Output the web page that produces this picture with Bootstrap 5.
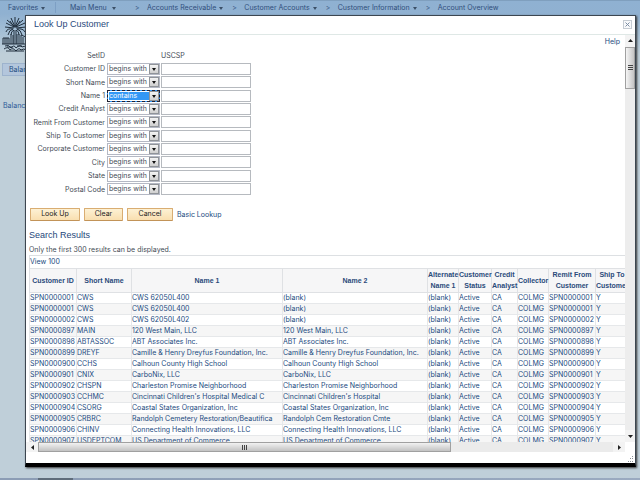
<!DOCTYPE html>
<html lang="en">
<head>
<meta charset="utf-8">
<meta name="viewport" content="width=device-width, initial-scale=1">
<title>Look Up Customer</title>
<link href="https://cdn.jsdelivr.net/npm/bootstrap@5.3.0/dist/css/bootstrap.min.css" rel="stylesheet">
<style>
:root { --ui: Inter, "Liberation Sans", Arial, sans-serif; --display: "Liberation Sans", Arial, sans-serif; }
body { font-family: var(--ui); font-size: 7px; line-height: 11px; color: #444b55; min-height: 100vh;
  background: linear-gradient(#8fb1d2 0, #90b1d1 14px, #a9c2d6 36px, #bfcfd9 54px, #bfcfd9 100%); }
a { text-decoration: none; color: #1b4a80; }
button, input, select { font-family: inherit; font-size: inherit; line-height: inherit; color: inherit; }
.crumbs { height: 14px; border-top: 1px solid #7f9fbe; color: #304f7c; }
.crumbs a { color: #304f7c; }
.caret { display: inline-block; border: 2px solid transparent; border-top: 3px solid #3c5068; border-bottom: 0; vertical-align: middle; margin-left: 3px; }
.fav { border-right: 1px solid #7d9fc4; width: 56px; padding-left: 8px; }
.main-menu { width: 79px; padding-left: 14px; }
.sep { width: 12px; }
.crumb-next { margin-left: 9px; }
.emblem { display: block; margin: 3px 0 11px 2px; }
.page-tab { display: block; width: 60px; height: 13px; margin-left: 2px; padding: 0 0 0 6px; border: 1px solid #9db3cd; background: #b3c6dc; }
.side-label { margin: 24px 0 0 3px; color: #2d5a98; }
.taskline { height: 2px; background: linear-gradient(90deg, #8c9db5 38px, #5f6d7b 38px, #5f6d7b 73px, #8c9db5 73px, #9aaac0); }
.lookup { position: absolute; inset: 15px 4px 13px 25px; background: #fff; border: 1px solid #3c4650; border-bottom: 4px solid #000; box-shadow: 1px 1px 2px #333; }
.lookup-head { height: 19px; border-bottom: 1px solid #dfe8e6; padding: 0 3px 0 8px; }
.lookup-head h1 { font: 9px/17px var(--display); color: #2b4a7c; }
.close-x { width: 9px; height: 9px; border: 1px solid #c6ccd3; background: #f8f9fb; padding: 0; }
.pane { min-width: 0; min-height: 0; overflow: hidden; }
.inner { padding: 0 0 0 3px; }
.help { padding-right: 5px; height: 14px; padding-top: 1px; }
.criteria { height: 147px; }
.criteria .crit { gap: 1px; }
.crit label, .crit .tag { width: 76px; text-align: right; white-space: nowrap; margin-right: 1px; }
.pick { position: relative; width: 53px; height: 12px; }
.pick select { appearance: none; width: 100%; height: 12px; border: 1px solid #b4b8c4; border-radius: 0; background: #fff; padding: 0 0 0 1px; line-height: 10px; outline: 0; }
.pick::after { content: ""; position: absolute; right: 1px; top: 1px; width: 10px; height: 10px; border: 1px solid #909499; background: linear-gradient(#f4f4f4, #cfcfcf); pointer-events: none; }
.pick::before { content: ""; position: absolute; z-index: 1; right: 4px; top: 5px; border: 2px solid transparent; border-top: 3px solid #111; border-bottom: 0; pointer-events: none; }
.pick.active select { background: #3397f5; color: #fff; border: 1px dashed #223; box-shadow: inset 0 0 0 1px #fff; }
.entry { width: 90px; height: 12px; border: 1px solid #b6babf; border-radius: 0; padding: 0 2px; }
.act { height: 13px; border: 1px solid #d9ad72; border-bottom-color: #c29358; border-radius: 1px; background: linear-gradient(#fdf1d4, #f9dfb0); color: #222; padding: 0; line-height: 10px; }
.w50 { width: 50px; } .w39 { width: 39px; } .w46 { width: 46px; }
.actions { margin: 12px 0 0 1px; height: 13px; gap: 4px; }
.inner h2 { font: 9px/12px var(--display); color: #25477a; margin: 8px 0 3px; }
.note { height: 11px; }
.results { width: 600px; table-layout: fixed; border-collapse: collapse; color: #1b4a80; margin: 0; }
.results caption { caption-side: top; border: 1px solid #dde0e3; border-bottom: 0; height: 13px; padding: 0; color: #1b4a80; }
.results th { height: 24px; background: #f6f6f7; border: 1px solid #dfe1e4; font: bold 7px/11px var(--display); text-align: center; vertical-align: middle; padding: 0; color: #2a4a7a; }
.results td { height: 11px; line-height: 10px; border: 1px solid #e6e8ea; padding: 0; white-space: nowrap; }
.results tbody tr:nth-child(even) { background: #f6f6f6; }
.results a { color: inherit; }
.vbar { width: 10px; background: #ededed; }
.hbar { height: 10px; background: #ebebeb; margin-right: 10px; }
.knob { padding: 0; border: 0; background: #f3f3f3; display: flex; align-items: center; justify-content: center; flex: none; }
.vbar .knob { height: 12px; } .hbar .knob { width: 12px; }
.vthumb { height: 42px; border: 1px solid #a0a0a0; background: linear-gradient(90deg, #f5f5f5, #c4c4c4); display: flex; align-items: center; justify-content: center; }
.hthumb { width: 69%; border: 1px solid #a0a0a0; background: linear-gradient(#f2f2f2, #c2c2c2); display: flex; align-items: center; justify-content: center; }
.foot { height: 11px; padding: 4px 1px 0 0; }
svg { display: block; }
</style>
<script src="https://cdn.jsdelivr.net/npm/bootstrap@5.3.0/dist/js/bootstrap.bundle.min.js"></script>
</head>
<body class="d-flex flex-column position-relative overflow-hidden">
<nav class="crumbs d-flex align-items-center text-nowrap" aria-label="Breadcrumb">
  <div class="fav"><a href="#">Favorites<span class="caret"></span></a></div>
  <div class="main-menu"><a href="#">Main Menu <span class="caret"></span></a></div>
  <span class="sep">&gt;</span>
  <a href="#">Accounts Receivable<span class="caret"></span></a>
  <span class="sep crumb-next">&gt;</span>
  <a href="#">Customer Accounts<span class="caret"></span></a>
  <span class="sep crumb-next">&gt;</span>
  <a href="#">Customer Information<span class="caret"></span></a>
  <span class="sep crumb-next">&gt;</span>
  <a href="#">Account Overview</a>
</nav>
<main class="flex-grow-1">
  <svg class="emblem" width="25" height="35" viewBox="0 0 25 35" fill="none" stroke="#1f2d3b" stroke-width="1">
    <path d="M13 11L13 0M13 10L9 1M13 10L17 1M12 9L5 3M14 9L21 3M12 10L4 6M14 10L23 6M12 11L3 10M14 11L24 10M11 12Q5 11 4 15M15 12Q21 11 23 15M11 12Q7 13 6 18M15 12Q19 13 20 18M12 13Q9 14 9 18M14 13Q17 14 17 18M8 4L12 10M18 4L14 10"/>
    <path d="M12 13V27M14 13V27M9 17V27M17 17V27M11 18V27M15 17V27" />
    <path d="M1 21H7V27M1 21V27M3 21V27M5 21V27M19 18L24 20V27M19 18V27M21 20V27M0 27H25"/>
    <path d="M3 29Q7 27 9 31Q12 27 14 31Q18 27 20 30Q23 28 24 31M2 32Q6 29 8 33Q11 30 14 34Q17 30 19 33Q22 31 24 33M4 34H22M5 30H11M15 29H20"/>
  </svg>
  <a class="page-tab" href="#">Balances</a>
  <div class="side-label">Balance</div>
</main>
<div class="taskline"></div>

<section class="lookup d-flex flex-column" role="dialog" aria-labelledby="lookup-title">
  <header class="lookup-head d-flex justify-content-between align-items-center">
    <h1 id="lookup-title" class="m-0">Look Up Customer</h1>
    <button type="button" class="close-x" aria-label="Close"><svg width="7" height="7" viewBox="0 0 7 7" stroke="#7c8da3"><path d="M1.500 1.500L5.500 5.500M5.500 1.500L1.500 5.500"/></svg></button>
  </header>
  <div class="d-flex flex-grow-1 pane">
    <div class="pane flex-grow-1">
      <div class="inner">
        <div class="help text-end"><a href="#">Help</a></div>
        <form id="criteria" class="criteria d-flex flex-column">
          <div class="crit d-flex align-items-center flex-fill"><span class="tag">SetID</span><span class="pick invisible"></span><span>USCSP</span></div>
        </form>
        <div class="actions d-flex align-items-center">
          <button type="button" class="act w50">Look Up</button>
          <button type="button" class="act w39">Clear</button>
          <button type="button" class="act w46">Cancel</button>
          <a href="#">Basic Lookup</a>
        </div>
        <h2>Search Results</h2>
        <div class="note">Only the first 300 results can be displayed.</div>
        <table class="results">
          <caption><a href="#">View 100</a></caption>
          <colgroup><col style="width:47px"><col style="width:55px"><col style="width:151px"><col style="width:145px"><col style="width:31px"><col style="width:33px"><col style="width:26px"><col style="width:31px"><col style="width:47px"><col></colgroup>
          <thead><tr><th>Customer ID</th><th>Short Name</th><th>Name 1</th><th>Name 2</th><th>Alternate Name 1</th><th>Customer Status</th><th>Credit Analyst</th><th>Collector</th><th>Remit From Customer</th><th>Ship To Customer</th></tr></thead>
          <tbody id="rows"></tbody>
        </table>
      </div>
    </div>
    <div class="vbar d-flex flex-column">
      <button type="button" class="knob" aria-label="Scroll up"><svg width="5" height="3"><path d="M0 3L2.500 0L5 3z" fill="#222"/></svg></button>
      <div class="vthumb"><svg width="5" height="6" stroke="#444"><path d="M0 .5H5M0 2.500H5M0 4.500H5"/></svg></div>
      <button type="button" class="knob mt-auto" aria-label="Scroll down"><svg width="5" height="3"><path d="M0 0L2.500 3L5 0z" fill="#222"/></svg></button>
    </div>
  </div>
  <div class="hbar d-flex">
    <button type="button" class="knob" aria-label="Scroll left"><svg width="3" height="5"><path d="M3 0L0 2.500L3 5z" fill="#222"/></svg></button>
    <div class="hthumb"><svg width="6" height="5" stroke="#444"><path d="M.5 0V5M2.500 0V5M4.500 0V5"/></svg></div>
    <button type="button" class="knob ms-auto" aria-label="Scroll right"><svg width="3" height="5"><path d="M0 0L3 2.500L0 5z" fill="#222"/></svg></button>
  </div>
  <div class="foot d-flex justify-content-end"><svg width="7" height="7" fill="#8b9096"><path d="M5 0h1v1h-1zM3 2h1v1h-1zM5 2h1v1h-1zM1 5h1v1h-1zM3 5h1v1h-1zM5 5h1v1h-1z"/></svg></div>
</section>
<script>
const fields = ["Customer ID", "Short Name", "Name 1", "Credit Analyst", "Remit From Customer", "Ship To Customer", "Corporate Customer", "City", "State", "Postal Code"];
document.getElementById("criteria").insertAdjacentHTML("beforeend", fields.map((f, i) => {
  const on = f === "Name 1";
  return `<div class="crit d-flex align-items-center flex-fill"><label for="v${i}">${f}</label><span class="pick${on ? " active" : ""}"><select aria-label="${f} operator"><option>begins with</option><option${on ? " selected" : ""}>contains</option></select></span><input class="entry" type="text" id="v${i}"></div>`;
}).join(""));
const data = [
  ["0001", "CWS", "CWS 62050L400", "(blank)"],
  ["0001", "CWS", "CWS 62050L400", "(blank)"],
  ["0002", "CWS", "CWS 62050L402", "(blank)"],
  ["0897", "MAIN", "120 West Main, LLC", "120 West Main, LLC"],
  ["0898", "ABTASSOC", "ABT Associates Inc.", "ABT Associates Inc."],
  ["0899", "DREYF", "Camille & Henry Dreyfus Foundation, Inc.", "Camille & Henry Dreyfus Foundation, Inc."],
  ["0900", "CCHS", "Calhoun County High School", "Calhoun County High School"],
  ["0901", "CNIX", "CarboNix, LLC", "CarboNix, LLC"],
  ["0902", "CHSPN", "Charleston Promise Neighborhood", "Charleston Promise Neighborhood"],
  ["0903", "CCHMC", "Cincinnati Children's Hospital Medical C", "Cincinnati Children's Hospital"],
  ["0904", "CSORG", "Coastal States Organization, Inc", "Coastal States Organization, Inc"],
  ["0905", "CRBRC", "Randolph Cemetery Restoration/Beautifica", "Randolph Cem Restoration Cmte"],
  ["0906", "CHINV", "Connecting Health Innovations, LLC", "Connecting Health Innovations, LLC"],
  ["0907", "USDEPTCOM", "US Department of Commerce", "US Department of Commerce"]
];
document.getElementById("rows").innerHTML = data.map(([n, s, a, b]) =>
  "<tr>" + ["SPN000" + n, s, a, b, "(blank)", "Active", "CA", "COLMG", "SPN000" + n, "Y"]
    .map(t => `<td><a href="#">${t.replace("&", "&amp;")}</a></td>`).join("") + "</tr>").join("");
</script>
</body>
</html>
